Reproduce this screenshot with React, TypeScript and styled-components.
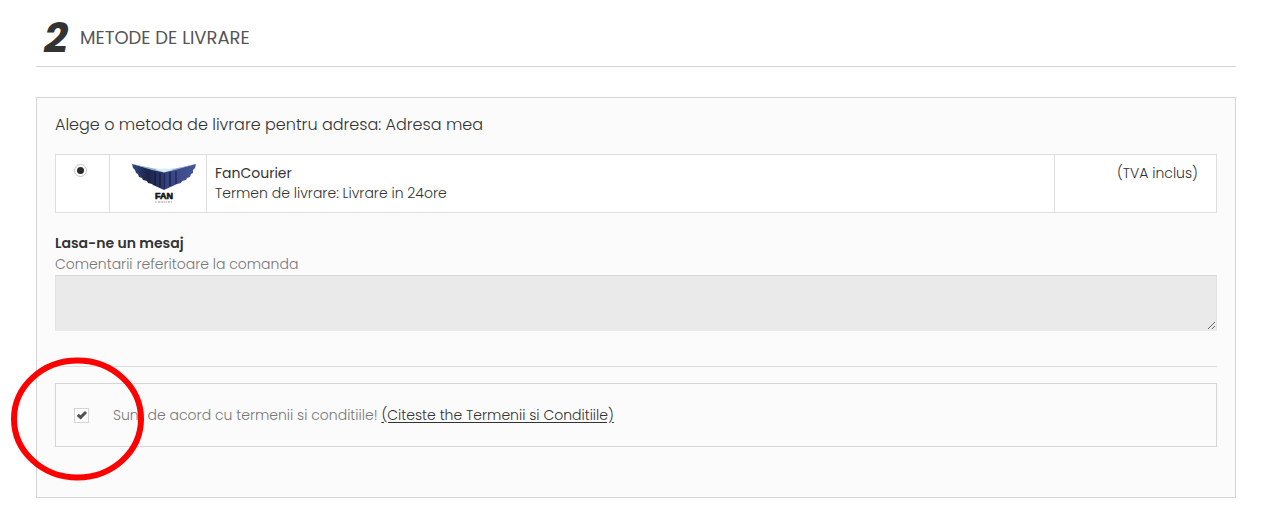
import React from "react";
import styled, { createGlobalStyle } from "styled-components";

const GlobalStyle = createGlobalStyle`
  *, *::before, *::after { box-sizing: border-box; }
  body {
    margin: 0;
    background: #fff;
    color: #333;
    font-family: Poppins, Inter, "Liberation Sans", sans-serif;
    font-size: 14px;
    font-weight: 300;
    line-height: 20px;
  }
`;

const Page = styled.main`
  padding: 8px 38px 26px 36px;
`;

const StepHeader = styled.header`
  display: flex;
  align-items: center;
  gap: 12px;
  height: 59px;
  padding: 2px 0 0 8px;
  border-bottom: 1px solid #d6d4d4;
`;

const StepNumber = styled.span`
  font-size: 42px;
  line-height: 56px;
  font-weight: 700;
  font-style: italic;
`;

const StepTitle = styled.h1`
  margin: 0;
  color: #555;
  font-size: 18px;
  line-height: 24px;
  font-weight: 400;
  text-transform: uppercase;
`;

const Panel = styled.section`
  margin-top: 30px;
  padding: 16px 18px 50px;
  background: #fbfbfb;
  border: 1px solid #d6d4d4;
`;

const AddressTitle = styled.h2`
  margin: 0 0 18px;
  font-size: 16px;
  line-height: 22px;
  font-weight: 300;
`;

const Methods = styled.table`
  width: 100%;
  table-layout: fixed;
  border-collapse: collapse;
  background: #fff;
`;

const Cell = styled.td<{ $align?: string; $pad?: string }>`
  height: 58px;
  padding: ${(p) => p.$pad ?? "8px"};
  border: 1px solid #dedede;
  text-align: ${(p) => p.$align ?? "left"};
  vertical-align: top;
`;

const Radio = styled.input`
  appearance: none;
  display: grid;
  place-items: center;
  width: 13px;
  height: 13px;
  margin: 0;
  background: #fff;
  border: 1px solid #c4c4c4;
  border-radius: 50%;
  &:checked::before {
    content: "";
    width: 7px;
    height: 7px;
    border-radius: 50%;
    background: #2b2b2b;
  }
`;

const MethodLabel = styled.label`
  display: block;
`;

const MethodName = styled.strong`
  display: block;
  font-weight: 400;
`;

const Logo = styled.svg`
  display: block;
  width: 64px;
  height: 41px;
`;

const MessageTitle = styled.h3`
  margin: 20px 0 0;
  font-size: 14px;
  line-height: 21px;
  font-weight: 600;
`;

const MessageLabel = styled.label`
  display: block;
  color: #777;
  line-height: 21px;
`;

const Message = styled.textarea`
  display: block;
  width: 100%;
  height: 56px;
  padding: 6px;
  background: #eaeaea;
  border: 1px solid #e3e3e3;
  border-top-color: #d6d4d4;
  border-bottom-color: #eaeaea;
  font: inherit;
  resize: vertical;
`;

const Divider = styled.hr`
  margin: 35px 0 16px;
  border: 0;
  border-top: 1px solid #dedede;
`;

const Terms = styled.div`
  display: flex;
  align-items: center;
  gap: 24px;
  height: 64px;
  padding: 0 18px;
  border: 1px solid #d6d4d4;
  color: #777;
  line-height: 21px;
`;

const CheckHolder = styled.span`
  position: relative;
  flex: none;
  width: 15px;
  height: 15px;
`;

const Checkbox = styled.input`
  appearance: none;
  display: block;
  width: 15px;
  height: 15px;
  margin: 0;
  background: #fff;
  border: 1px solid #d6d4d4;
  &:not(:checked) + svg { display: none; }
`;

const Tick = styled.svg`
  position: absolute;
  inset: 0;
  pointer-events: none;
`;

const Highlight = styled.svg`
  position: absolute;
  top: 50%;
  left: 50%;
  width: 134px;
  height: 124px;
  margin: -58px 0 0 -71px;
  pointer-events: none;
`;

const TermsLink = styled.a`
  color: #333;
  text-decoration: underline;
  text-underline-offset: 2px;
`;

function FanLogo() {
  return (
    <Logo viewBox="0 0 64 41" role="img" aria-label="FAN Courier">
      <defs>
        <linearGradient id="wingLeft" x1="0" x2="1">
          <stop offset="0" stopColor="#344782" />
          <stop offset=".5" stopColor="#1b2347" />
          <stop offset="1" stopColor="#303b72" />
        </linearGradient>
        <linearGradient id="wingRight" x1="0" x2="1">
          <stop offset="0" stopColor="#36417d" />
          <stop offset="1" stopColor="#46569a" />
        </linearGradient>
      </defs>
      <g transform="translate(0 1)">
        <path
          d="M0 0 L20 5 L32 6 L32 26 L21 21 L20 20 L16 19 L15 17 L11 16 L10 14 L7 13 L6 10 L4 9 L3 6 L1 4Z"
          fill="url(#wingLeft)"
        />
        <path
          d="M64 0 L44 5 L32 6 L32 26 L43 21 L45 20 L49 19 L50 17 L54 16 L55 14 L58 13 L59 10 L61 9 L61 6 L63 4Z"
          fill="url(#wingRight)"
        />
        <path d="M0 0 L22 4.6 Q32 6 43 4.6 L64 0 L43 6 L32 8.5 L20 6Z" fill="#8fb3d0" />
        <path d="M23 5.5 Q32 3.5 42 5.5 L32 8.2Z" fill="#dcebf2" />
        <path d="M23 7.5V21M28 8.5V23M38 8V22" stroke="#141a3b" strokeWidth="1.2" />
        <path d="M44 7V20M32.5 9V25" stroke="#202a5c" strokeWidth="1.4" />
      </g>
      <text x="32" y="36" textAnchor="middle" fontFamily="Liberation Sans, sans-serif" fontSize="9" fontWeight="700" fill="#111" stroke="#111" strokeWidth=".6">
        FAN
      </text>
      <text x="32" y="40" textAnchor="middle" fontFamily="Liberation Sans, sans-serif" fontSize="4" letterSpacing=".8" fill="#777">
        courier
      </text>
    </Logo>
  );
}

export default function App() {
  return (
    <>
      <GlobalStyle />
      <Page>
        <StepHeader>
          <StepNumber>2</StepNumber>
          <StepTitle>Metode de livrare</StepTitle>
        </StepHeader>
        <Panel>
          <AddressTitle>Alege o metoda de livrare pentru adresa: Adresa mea</AddressTitle>
          <Methods>
            <colgroup>
              <col style={{ width: 54 }} />
              <col style={{ width: 97 }} />
              <col />
              <col style={{ width: 162 }} />
            </colgroup>
            <tbody>
              <tr>
                <Cell $pad="9px 18px">
                  <Radio type="radio" id="fan" name="delivery" defaultChecked />
                </Cell>
                <Cell $pad="8px 10px 8px 22px">
                  <FanLogo />
                </Cell>
                <Cell>
                  <MethodLabel htmlFor="fan">
                    <MethodName>FanCourier</MethodName>
                    Termen de livrare: Livrare in 24ore
                  </MethodLabel>
                </Cell>
                <Cell $align="right" $pad="8px 18px">(TVA inclus)</Cell>
              </tr>
            </tbody>
          </Methods>
          <MessageTitle>Lasa-ne un mesaj</MessageTitle>
          <MessageLabel htmlFor="message">Comentarii referitoare la comanda</MessageLabel>
          <Message id="message" />
          <Divider />
          <Terms>
            <CheckHolder>
              <Checkbox type="checkbox" id="terms" defaultChecked />
              <Tick width="15" height="15" viewBox="0 0 15 15" aria-hidden="true">
                <path d="M3.7 6.8 L6.6 9.4 L12 4" fill="none" stroke="#505050" strokeWidth="2.9" />
              </Tick>
              <Highlight viewBox="0 0 134 124" aria-hidden="true">
                <ellipse cx="66.5" cy="62" rx="63.5" ry="58.5" fill="none" stroke="#fe0000" strokeWidth="6" />
              </Highlight>
            </CheckHolder>
            <span>
              <label htmlFor="terms">Sunt de acord cu termenii si conditiile!</label>{" "}
              <TermsLink href="#terms">(Citeste the Termenii si Conditiile)</TermsLink>
            </span>
          </Terms>
        </Panel>
      </Page>
    </>
  );
}
